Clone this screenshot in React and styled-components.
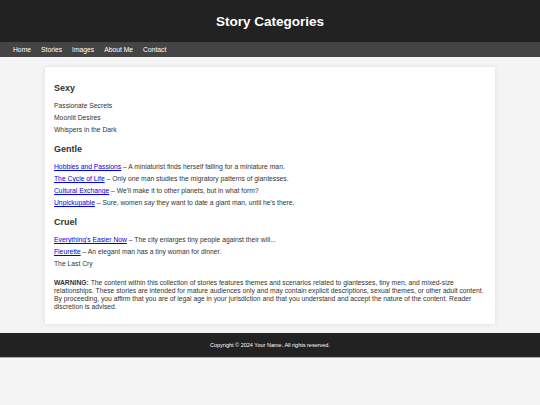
import React from "react";
import styled, { createGlobalStyle } from "styled-components";

const GlobalStyle = createGlobalStyle`
  html, body {
    margin: 0;
    padding: 0;
    background: #f4f4f4;
    font-family: "Liberation Sans", Arial, sans-serif;
    color: #333;
  }
  body {
    min-height: 405px;
  }
`;

const Header = styled.header`
  background: #222;
  color: #fff;
  height: 42px;
  display: flex;
  align-items: center;
  justify-content: center;
`;

const Title = styled.h1`
  margin: 0;
  font-size: 13.5px;
  font-weight: bold;
`;

const Nav = styled.nav`
  background: #444;
  height: 15px;
  display: flex;
  align-items: center;
  padding: 0 13px;
  gap: 10px;
`;

const NavLink = styled.a`
  color: #fff;
  font-size: 6.75px;
  text-decoration: none;
`;

const Card = styled.main`
  width: 80%;
  margin: 10px auto 9px;
  padding: 8px 9px 13px;
  background: #fff;
  box-shadow: 0 0 4px rgba(0, 0, 0, 0.1);
`;

const Section = styled.section`
  margin-bottom: 4px;
`;

const Heading = styled.h3`
  margin: 8px 0 7px;
  font-size: 9px;
  font-weight: bold;
  color: #333;
`;

const List = styled.ul`
  list-style: none;
  margin: 0;
  padding: 0;
`;

const Item = styled.li`
  font-size: 6.75px;
  line-height: 12px;
  color: #333;
`;

const StoryLink = styled.a`
  color: #0000ee;
  text-decoration: underline;
`;

const Warning = styled.p`
  margin: 9px 0 0;
  font-size: 6.75px;
  line-height: 8px;
  color: #333;
`;

const Footer = styled.footer`
  background: #222;
  color: #fff;
  height: 24px;
  display: flex;
  align-items: center;
  justify-content: center;
  font-size: 5.5px;
  border-bottom: 1px solid #aaa;
`;

const categories = [
  {
    name: "Sexy",
    stories: [
      { title: "Passionate Secrets" },
      { title: "Moonlit Desires" },
      { title: "Whispers in the Dark" },
    ],
  },
  {
    name: "Gentle",
    stories: [
      { title: "Hobbies and Passions", link: true, blurb: "A miniaturist finds herself falling for a miniature man." },
      { title: "The Cycle of Life", link: true, blurb: "Only one man studies the migratory patterns of giantesses." },
      { title: "Cultural Exchange", link: true, blurb: "We'll make it to other planets, but in what form?" },
      {
        title: "Unpickupable",
        link: true,
        blurb: (
          <>
            Sure, women <em>say</em> they want to date a giant man, until he's there.
          </>
        ),
      },
    ],
  },
  {
    name: "Cruel",
    stories: [
      { title: "Everything's Easier Now", link: true, blurb: "The city enlarges tiny people against their will..." },
      { title: "Fleurette", link: true, blurb: "An elegant man has a tiny woman for dinner." },
      { title: "The Last Cry" },
    ],
  },
];

export default function App() {
  return (
    <>
      <GlobalStyle />
      <Header>
        <Title>Story Categories</Title>
      </Header>
      <Nav>
        <NavLink href="#">Home</NavLink>
        <NavLink href="#">Stories</NavLink>
        <NavLink href="#">Images</NavLink>
        <NavLink href="#">About Me</NavLink>
        <NavLink href="#">Contact</NavLink>
      </Nav>
      <Card>
        {categories.map((cat) => (
          <Section key={cat.name}>
            <Heading>{cat.name}</Heading>
            <List>
              {cat.stories.map((s) => (
                <Item key={s.title}>
                  {s.link ? <StoryLink href="#">{s.title}</StoryLink> : s.title}
                  {s.blurb && <> – {s.blurb}</>}
                </Item>
              ))}
            </List>
          </Section>
        ))}
        <Warning>
          <strong>WARNING:</strong> The content within this collection of stories features themes and
          scenarios related to giantesses, tiny men, and mixed-size relationships. These stories are
          intended for mature audiences only and may contain explicit descriptions, sexual themes, or
          other adult content. By proceeding, you affirm that you are of legal age in your jurisdiction
          and that you understand and accept the nature of the content. Reader discretion is advised.
        </Warning>
      </Card>
      <Footer>Copyright © 2024 Your Name. All rights reserved.</Footer>
    </>
  );
}
